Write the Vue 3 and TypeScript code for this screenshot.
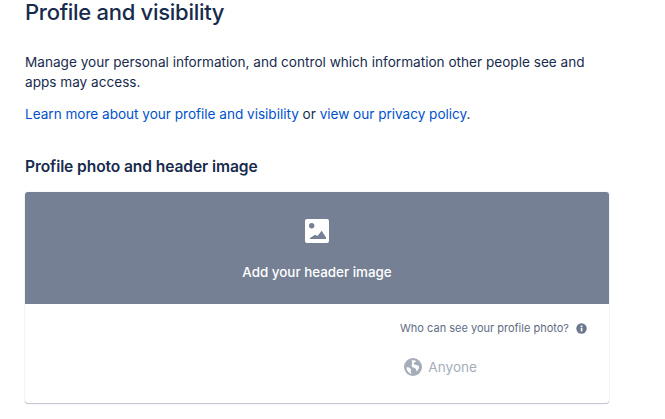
<script setup lang="ts">
const who: string = 'Who can see your profile photo?'
</script>

<template>
  <main class="page">
    <h1 class="title">Profile and visibility</h1>
    <p class="intro">Manage your personal information, and control which information other people see and apps may access.</p>
    <p class="learn"><a>Learn more about your profile and visibility</a> or <a>view our privacy policy</a>.</p>
    <h2 class="sub">Profile photo and header image</h2>
    <section class="card">
      <div class="banner">
        <svg class="pic" width="26" height="26" viewBox="0 0 26 26">
          <path fill="#fff" fill-rule="evenodd" d="M3 1h20a2 2 0 0 1 2 2v20a2 2 0 0 1-2 2H3a2 2 0 0 1-2-2V3a2 2 0 0 1 2-2Zm7.400 6.700a2.700 2.700 0 1 0-5.400 0 2.700 2.700 0 1 0 5.400 0ZM6 21h16v-1.500l-4.300-6.800-4.200 5.300-2.500-1.300L6 20Z" />
        </svg>
        <span class="add">Add your header image</span>
      </div>
      <div class="foot">
        <div class="who">
          <span>{{ who }}</span>
          <svg width="11" height="11" viewBox="0 0 11 11">
            <circle cx="5.500" cy="5.500" r="5.200" fill="#6b778c" />
            <rect x="4.700" y="4.800" width="1.700" height="3.600" fill="#fff" />
            <rect x="4.700" y="2.500" width="1.700" height="1.600" fill="#fff" />
          </svg>
        </div>
        <div class="anyone">
          <svg width="18" height="18" viewBox="0 0 18 18">
            <circle cx="9" cy="9" r="9" fill="#a5adba" />
            <path fill="#fff" d="M2.400 9.500c1.500-.4 3-.2 3.800.8.800 1 .9 1.600.6 2.800-.2 1 .4 2.200.9 2.800-2.800-.5-4.900-3.300-5.300-6.400ZM7.500 2.600c1.700-.5 3.300-.3 4.600.4-.5 1-1.100 1.300-1.800 1.600-.5.300-.6.900-.4 1.400.4.700 1.300.8 2.200.9 1.400.1 2.500.6 3 1.500-.1 1.600-.6 3.500-2.400 5-.5-1-.6-2-1.200-2.800-.7-.9-2-.7-3-1.400-1-.7-1.200-1.900-.5-3 .4-.8.400-1.800-.5-3.600Z" />
          </svg>
          <span>Anyone</span>
        </div>
      </div>
    </section>
  </main>
</template>

<style scoped>
.page {
  width: 665px;
  height: 419px;
  box-sizing: border-box;
  padding: 0 56px 0 25px;
  overflow: hidden;
  font-family: Inter, "Liberation Sans", sans-serif;
  font-size: 13.6px;
  color: #172b4d;
  background: #fff;
}
.title {
  margin: 0;
  font-size: 22px;
  line-height: 24px;
  font-weight: 500;
  letter-spacing: -0.28px;
}
.intro {
  margin: 28px 0 0;
  line-height: 20px;
}
.learn {
  margin: 12px 0 0;
  line-height: 20px;
  letter-spacing: -0.02px;
}
.learn a {
  color: #0052cc;
}
.sub {
  margin: 33px 0 0;
  font-size: 15.6px;
  line-height: 20px;
  font-weight: 600;
  letter-spacing: -0.1px;
}
.card {
  width: 584px;
  height: 211px;
  margin-top: 15px;
  border-radius: 3px;
  overflow: hidden;
  background: #fff;
  box-shadow: 0 1px 1px rgba(9, 30, 66, 0.25), 0 0 1px rgba(9, 30, 66, 0.25);
}
.banner {
  height: 112px;
  background: #758095;
  display: flex;
  flex-direction: column;
  align-items: center;
  padding-top: 26px;
  box-sizing: border-box;
  color: #fff;
}
.add {
  margin-top: 18px;
  font-size: 13.4px;
  font-weight: 500;
  line-height: 20px;
}
.foot {
  display: flex;
  flex-direction: column;
  align-items: flex-end;
  padding: 16px 22px 0 0;
}
.who {
  display: flex;
  align-items: center;
  gap: 7px;
  font-size: 11px;
  line-height: 16px;
  color: #5e6c84;
}
.anyone {
  display: flex;
  align-items: center;
  gap: 6px;
  margin: 21px 110px 0 0;
  color: #a5adba;
  line-height: 20px;
}
</style>
